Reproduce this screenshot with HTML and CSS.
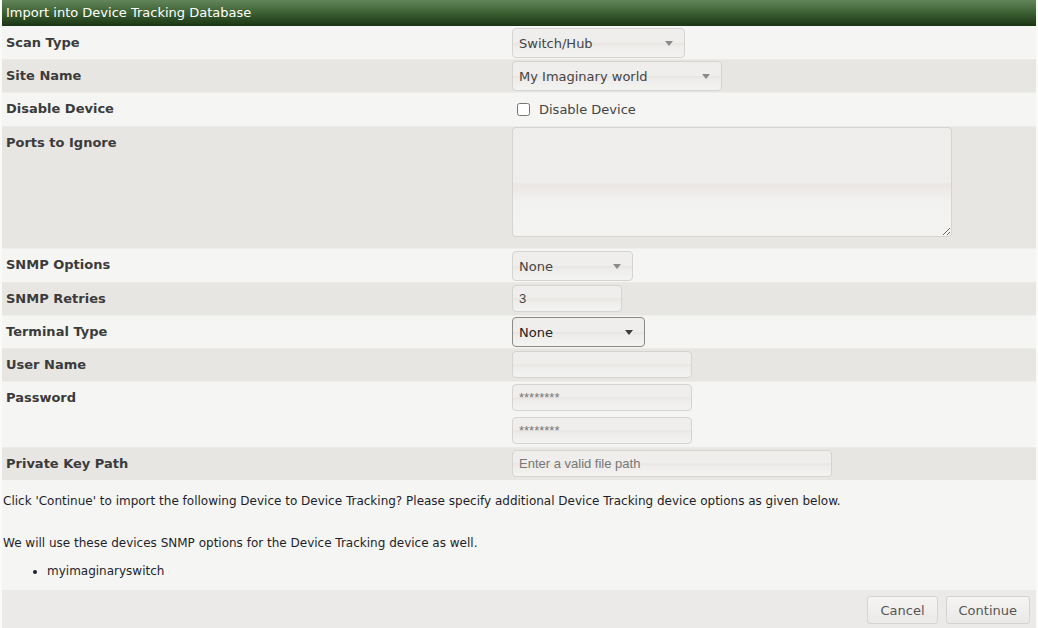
FILE: index.html
```html
<!DOCTYPE html>
<html lang="en">
<head>
<meta charset="utf-8">
<title>Import into Device Tracking Database</title>
<link rel="stylesheet" href="styles.css">
</head>
<body>
<div class="dialog">
  <div class="titlebar">Import into Device Tracking Database</div>
  <div class="form">
    <div class="row light">
      <div class="label">Scan Type</div>
      <div class="field"><div class="select w-scan">Switch/Hub<span class="caret"></span></div></div>
    </div>
    <div class="row dark">
      <div class="label">Site Name</div>
      <div class="field"><div class="select w-site">My Imaginary world<span class="caret"></span></div></div>
    </div>
    <div class="row light">
      <div class="label">Disable Device</div>
      <div class="field check"><label class="checkbox"><input type="checkbox"><span>Disable Device</span></label></div>
    </div>
    <div class="row dark">
      <div class="label">Ports to Ignore</div>
      <div class="field area"><textarea class="textarea"></textarea></div>
    </div>
    <div class="row light">
      <div class="label">SNMP Options</div>
      <div class="field tall"><div class="select w-snmp">None<span class="caret"></span></div></div>
    </div>
    <div class="row dark">
      <div class="label">SNMP Retries</div>
      <div class="field inputs"><input class="text w-retries" type="text" value="3"></div>
    </div>
    <div class="row light">
      <div class="label">Terminal Type</div>
      <div class="field"><div class="select w-term focused">None<span class="caret"></span></div></div>
    </div>
    <div class="row dark">
      <div class="label">User Name</div>
      <div class="field inputs"><input class="text w-user" type="text"></div>
    </div>
    <div class="row light">
      <div class="label">Password</div>
      <div class="field inputs stack">
        <input class="text w-user" type="password" placeholder="********">
        <input class="text w-user" type="password" placeholder="********">
      </div>
    </div>
    <div class="row dark">
      <div class="label">Private Key Path</div>
      <div class="field inputs"><input class="text w-key" type="text" placeholder="Enter a valid file path"></div>
    </div>
  </div>
  <div class="message">
    <p class="first">Click 'Continue' to import the following Device to Device Tracking? Please specify additional Device Tracking device options as given below.</p>
    <p class="second">We will use these devices SNMP options for the Device Tracking device as well.</p>
    <ul class="devices">
      <li>myimaginaryswitch</li>
    </ul>
  </div>
  <div class="buttonbar">
    <button class="btn" type="button">Cancel</button>
    <button class="btn" type="button">Continue</button>
  </div>
</div>
</body>
</html>
```
FILE: styles.css
```css
html, body {
  margin: 0;
  padding: 0;
  background: #fafaf9;
}
body {
  font-family: "DejaVu Sans", Verdana, sans-serif;
  font-size: 12px;
  color: #222;
}
.dialog {
  margin-left: 2px;
  width: 1034px;
  background: #f5f5f4;
}
.titlebar {
  height: 26px;
  box-sizing: border-box;
  padding: 5px 4px 0;
  line-height: 16px;
  font-size: 13px;
  color: #fff;
  background: linear-gradient(to bottom, #62845a 0%, #44683a 40%, #27461f 80%, #1b3514 100%);
}
.row {
  display: grid;
  grid-template-columns: 510px 1fr;
  box-shadow: inset 0 1px 0 #eeeeec;
}
.row:first-child { box-shadow: none; }
.row.light { background: #f5f5f4; }
.row.dark { background: #e8e6e3; box-shadow: inset 0 1px 0 #ecebe8; }
.label {
  padding: 9px 4px 0;
  line-height: 16px;
  font-size: 13px;
  font-weight: bold;
  color: #3b3b3b;
}
.field {
  padding: 2px 0 1px;
  display: flex;
  align-items: flex-start;
}
.field.tall { padding-top: 3px; }
.field.inputs { padding: 3px 0; }
.select {
  box-sizing: border-box;
  height: 30px;
  border: 1px solid #d6d4d1;
  border-radius: 4px;
  padding: 0 6px;
  display: flex;
  align-items: center;
  justify-content: space-between;
  font-size: 13px;
  color: #444;
  background: linear-gradient(to bottom, #efeeec 0%, #efeeec 48%, #e8e5e2 52%, #eeedeb 62%, #f3f3f2 100%);
}
.select.focused { border-color: #8c8a87; color: #222; }
.caret {
  width: 0;
  height: 0;
  margin-right: 5px;
  border-left: 4px solid transparent;
  border-right: 4px solid transparent;
  border-top: 5px solid #8a8a8a;
}
.select.focused .caret { border-top-color: #3e3e3e; }
.w-scan { width: 173px; }
.w-site { width: 210px; }
.w-snmp { width: 121px; }
.w-term { width: 133px; }
.w-retries { width: 110px; }
.w-user { width: 180px; }
.w-key { width: 320px; }
.field.check {
  padding: 0;
  height: 34px;
  align-items: center;
}
.checkbox {
  display: flex;
  align-items: center;
  font-size: 13px;
  color: #444;
}
.checkbox input {
  width: 13px;
  height: 13px;
  margin: 0 9px 0 5px;
}
.field.area { padding: 1px 0 11px; }
.textarea {
  display: block;
  box-sizing: border-box;
  width: 440px;
  height: 110px;
  margin: 0;
  border: 1px solid #d6d4d1;
  border-radius: 4px;
  background: linear-gradient(to bottom, #efeeec 0%, #efeeec 50%, #ebe7e4 52%, #eeeceb 60%, #f2f2f1 68%, #f3f3f2 100%);
}
.text {
  box-sizing: border-box;
  display: block;
  height: 27px;
  margin: 0;
  padding: 0 6px;
  border: 1px solid #d6d4d1;
  border-radius: 4px;
  font-family: "Liberation Sans", Arial, sans-serif;
  font-size: 13px;
  color: #444;
  background: linear-gradient(to bottom, #efeeec 0%, #efeeec 46%, #e9e6e3 52%, #eeedeb 62%, #f3f3f2 100%);
  outline: none;
}
.text::placeholder { color: #777; }
.field.stack {
  flex-direction: column;
  gap: 6px;
}
.message {
  padding: 13px 1px 11px;
  background: #f5f5f4;
  line-height: 16px;
  color: #1e1e2a;
}
.message p { margin: 0; }
.message .second { margin-top: 26px; }
.devices {
  margin: 12px 0 0;
  padding-left: 44px;
}
.buttonbar {
  height: 38px;
  box-sizing: border-box;
  padding: 6px 6px 0;
  display: flex;
  justify-content: flex-end;
  align-items: flex-start;
  gap: 8px;
  background: #ebeae8;
}
.btn {
  height: 28px;
  padding: 0 12px;
  border: 1px solid #d6d4d1;
  border-radius: 3px;
  font-family: "DejaVu Sans", Verdana, sans-serif;
  font-size: 13px;
  color: #555;
  background: linear-gradient(to bottom, #f4f4f3 0%, #f0efed 50%, #ebe9e7 100%);
}
```
